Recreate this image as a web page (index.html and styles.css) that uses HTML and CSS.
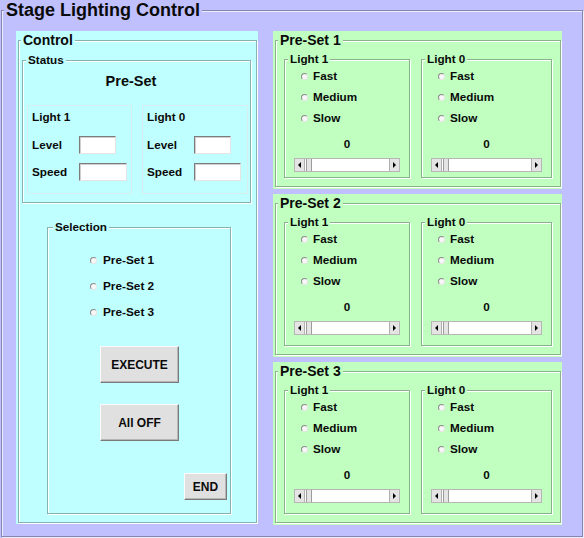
FILE: index.html
```html
<!DOCTYPE html>
<html>
<head>
<meta charset="utf-8">
<title>Stage Lighting Control</title>
<link rel="stylesheet" href="styles.css">
</head>
<body>
<fieldset class="frame">
  <legend class="frame-title">Stage Lighting Control</legend>
  <div class="frame-body">
    <div class="control-panel">
      <fieldset class="etched control-box">
        <legend class="title-lg">Control</legend>
        <div class="control-body">
          <fieldset class="etched status-box">
            <legend class="title-sm">Status</legend>
            <div class="status-heading">Pre-Set</div>
            <div class="status-lights">
              <div class="status-light l1">
                <div class="status-light-title">Light 1</div>
                <div class="field-row"><span class="field-label">Level</span><input class="text-field w-level" type="text"></div>
                <div class="field-row"><span class="field-label">Speed</span><input class="text-field w-speed" type="text"></div>
              </div>
              <div class="status-light l0">
                <div class="status-light-title">Light 0</div>
                <div class="field-row"><span class="field-label">Level</span><input class="text-field w-level" type="text"></div>
                <div class="field-row"><span class="field-label">Speed</span><input class="text-field w-speed-0" type="text"></div>
              </div>
            </div>
          </fieldset>
          <fieldset class="etched selection-box">
            <legend class="title-sm sel-legend">Selection</legend>
            <div class="selection-body">
              <div class="radio-group sel-radios">
                <label class="radio sel-radio"><input class="dot" type="radio" name="sel">Pre-Set 1</label>
                <label class="radio sel-radio"><input class="dot" type="radio" name="sel">Pre-Set 2</label>
                <label class="radio sel-radio"><input class="dot" type="radio" name="sel">Pre-Set 3</label>
              </div>
              <button class="btn btn-big btn-execute" type="button">EXECUTE</button>
              <button class="btn btn-big btn-alloff" type="button">All OFF</button>
              <button class="btn btn-end" type="button">END</button>
            </div>
          </fieldset>
        </div>
      </fieldset>
    </div>

    <div class="presets">
      <div class="preset-panel">
        <fieldset class="etched preset-box">
          <legend class="title-lg">Pre-Set 1</legend>
          <div class="preset-lights">
            <fieldset class="etched preset-light compact narrow">
              <legend class="title-sm">Light 1</legend>
              <div class="radio-group preset-radios">
                <label class="radio"><input class="dot" type="radio" name="p1l1">Fast</label>
                <label class="radio"><input class="dot" type="radio" name="p1l1">Medium</label>
                <label class="radio"><input class="dot" type="radio" name="p1l1">Slow</label>
              </div>
              <div class="level-value">0</div>
              <div class="scrollbar"><span class="sb-btn sb-left"></span><span class="sb-thumb"></span><span class="sb-track"></span><span class="sb-btn sb-right"></span></div>
            </fieldset>
            <fieldset class="etched preset-light compact wide">
              <legend class="title-sm">Light 0</legend>
              <div class="radio-group preset-radios">
                <label class="radio"><input class="dot" type="radio" name="p1l0">Fast</label>
                <label class="radio"><input class="dot" type="radio" name="p1l0">Medium</label>
                <label class="radio"><input class="dot" type="radio" name="p1l0">Slow</label>
              </div>
              <div class="level-value">0</div>
              <div class="scrollbar"><span class="sb-btn sb-left"></span><span class="sb-thumb"></span><span class="sb-track"></span><span class="sb-btn sb-right"></span></div>
            </fieldset>
          </div>
        </fieldset>
      </div>

      <div class="preset-panel">
        <fieldset class="etched preset-box">
          <legend class="title-lg">Pre-Set 2</legend>
          <div class="preset-lights">
            <fieldset class="etched preset-light narrow">
              <legend class="title-sm">Light 1</legend>
              <div class="radio-group preset-radios">
                <label class="radio"><input class="dot" type="radio" name="p2l1">Fast</label>
                <label class="radio"><input class="dot" type="radio" name="p2l1">Medium</label>
                <label class="radio"><input class="dot" type="radio" name="p2l1">Slow</label>
              </div>
              <div class="level-value">0</div>
              <div class="scrollbar"><span class="sb-btn sb-left"></span><span class="sb-thumb"></span><span class="sb-track"></span><span class="sb-btn sb-right"></span></div>
            </fieldset>
            <fieldset class="etched preset-light wide">
              <legend class="title-sm">Light 0</legend>
              <div class="radio-group preset-radios">
                <label class="radio"><input class="dot" type="radio" name="p2l0">Fast</label>
                <label class="radio"><input class="dot" type="radio" name="p2l0">Medium</label>
                <label class="radio"><input class="dot" type="radio" name="p2l0">Slow</label>
              </div>
              <div class="level-value">0</div>
              <div class="scrollbar"><span class="sb-btn sb-left"></span><span class="sb-thumb"></span><span class="sb-track"></span><span class="sb-btn sb-right"></span></div>
            </fieldset>
          </div>
        </fieldset>
      </div>

      <div class="preset-panel">
        <fieldset class="etched preset-box">
          <legend class="title-lg">Pre-Set 3</legend>
          <div class="preset-lights">
            <fieldset class="etched preset-light narrow">
              <legend class="title-sm">Light 1</legend>
              <div class="radio-group preset-radios">
                <label class="radio"><input class="dot" type="radio" name="p3l1">Fast</label>
                <label class="radio"><input class="dot" type="radio" name="p3l1">Medium</label>
                <label class="radio"><input class="dot" type="radio" name="p3l1">Slow</label>
              </div>
              <div class="level-value">0</div>
              <div class="scrollbar"><span class="sb-btn sb-left"></span><span class="sb-thumb"></span><span class="sb-track"></span><span class="sb-btn sb-right"></span></div>
            </fieldset>
            <fieldset class="etched preset-light wide">
              <legend class="title-sm">Light 0</legend>
              <div class="radio-group preset-radios">
                <label class="radio"><input class="dot" type="radio" name="p3l0">Fast</label>
                <label class="radio"><input class="dot" type="radio" name="p3l0">Medium</label>
                <label class="radio"><input class="dot" type="radio" name="p3l0">Slow</label>
              </div>
              <div class="level-value">0</div>
              <div class="scrollbar"><span class="sb-btn sb-left"></span><span class="sb-thumb"></span><span class="sb-track"></span><span class="sb-btn sb-right"></span></div>
            </fieldset>
          </div>
        </fieldset>
      </div>
    </div>
  </div>
</fieldset>
</body>
</html>
```

FILE: styles.css
```css
* { box-sizing: border-box; }

html, body { margin: 0; padding: 0; }

body {
  --panel-bg: #c0c0ff;
  --shade: #8686b2;
  width: 584px;
  height: 538px;
  overflow: hidden;
  background: #c0c0ff;
  font-family: "Liberation Sans", Arial, sans-serif;
  font-weight: bold;
  color: #0a0a0a;
}

fieldset { margin: 0; padding: 0; min-width: 0; }

legend {
  padding: 0 2px;
  background: var(--panel-bg);
}

.etched {
  border: 1px solid var(--shade);
  box-shadow: inset 1px 1px 0 #fff, 1px 1px 0 #fff;
}

/* outer frame */
.frame {
  margin-left: 1px;
  width: 582px;
  border: 1px solid var(--shade);
  box-shadow: inset 1px 1px 0 #ececff, 1px 1px 0 #ececff;
}
.frame-title {
  margin-left: 2px;
  font-size: 18px;
  line-height: 20px;
}
.frame-body {
  display: flex;
  align-items: flex-start;
  gap: 15px;
  padding: 11px 20px 11px 14px;
}

.title-lg { margin-left: 2px; font-size: 14px; line-height: 16px; }
.title-sm { margin-left: 3px; font-size: 11.7px; line-height: 14px; }

/* control column */
.control-panel {
  --panel-bg: #c0ffff;
  --shade: #86b2b2;
  width: 242px;
  height: 493px;
  padding: 1px 1px 1px 2px;
  background: #c0ffff;
  display: flex;
  flex-direction: column;
}
.control-box { flex: 1; }
.control-body { padding: 5px 0 0 3px; }

.status-box { width: 229px; }
.status-heading {
  margin-top: 5px;
  padding-right: 11px;
  font-size: 14.5px;
  line-height: 18px;
  text-align: center;
}
.status-lights {
  display: flex;
  gap: 10px;
  margin: 15px 0 8px 4px;
}
.status-light {
  border: 1px solid #d6eeee;
  padding: 4px 3px 12px 4px;
}
.status-light.l1 { width: 105px; }
.status-light.l0 { width: 106px; }
.status-light-title { font-size: 11.7px; line-height: 14px; }
.field-row {
  display: grid;
  grid-template-columns: 47px auto;
  align-items: center;
  margin-top: 12px;
}
.field-row + .field-row { margin-top: 9px; }
.field-label { font-size: 11.7px; line-height: 14px; }
.text-field {
  display: block;
  height: 18px;
  margin: 0;
  padding: 0;
  background: #fff;
  border: 1px solid;
  border-color: #7c7c7c #e4e4e4 #e4e4e4 #7c7c7c;
  box-shadow: inset 1px 1px 0 #cfcfcf;
  font: inherit;
  outline: none;
}
.w-level { width: 37px; }
.w-speed { width: 48px; }
.w-speed-0 { width: 47px; }

.selection-box { width: 184px; margin: 17px 0 0 25px; }
.sel-legend { margin-left: 5px; }
.selection-body {
  display: flex;
  flex-direction: column;
  align-items: flex-start;
  padding: 0 3px 13px 0;
}

.radio-group { display: flex; flex-direction: column; }
.sel-radios { gap: 12px; margin: 19px 0 0 42px; }
.radio {
  display: flex;
  align-items: center;
  gap: 5px;
  font-size: 11.7px;
  line-height: 14px;
}
.sel-radio { gap: 6px; font-size: 11.8px; }
.dot {
  -webkit-appearance: none;
  appearance: none;
  width: 7px;
  height: 7px;
  margin: 0;
  padding: 0;
  border-radius: 50%;
  border: 1px solid;
  border-color: #8a8a8a #e6e6e6 #e6e6e6 #8a8a8a;
  background: #f7f7f7;
  flex: none;
}

.btn {
  margin: 0;
  padding: 0;
  background: #e0e0e0;
  border: 1px solid;
  border-color: #fbfbfb #7a7a7a #7a7a7a #fbfbfb;
  box-shadow: inset -1px -1px 0 #b6b6b6;
  font: inherit;
  font-size: 12px;
  color: #0a0a0a;
}
.btn-big { width: 79px; height: 37px; margin-left: 52px; }
.btn-execute { margin-top: 27px; }
.btn-alloff { margin-top: 21px; }
.btn-end {
  width: 43px;
  height: 27px;
  margin-top: 32px;
  align-self: flex-end;
}

/* presets column */
.presets {
  width: 289px;
  display: flex;
  flex-direction: column;
  gap: 5px;
}
.preset-panel {
  --panel-bg: #c0ffc0;
  --shade: #8ab28a;
  background: #c0ffc0;
  padding: 1px 1px 2px 2px;
}
.preset-lights {
  display: flex;
  gap: 11px;
  margin: 4px 8px 8px 8px;
}
.preset-light { padding-bottom: 10px; }
.preset-light.compact { padding-bottom: 5px; }
.preset-light.narrow { width: 126px; }
.preset-light.wide { width: 131px; }
.preset-radios { gap: 7px; margin: 3px 0 0 16px; }
.level-value {
  margin-top: 12px;
  font-size: 11.7px;
  line-height: 14px;
  text-align: center;
}

.scrollbar {
  display: flex;
  height: 14px;
  margin: 7px 9px 0;
  border: 1px solid #b6b6b6;
  background: #fff;
}
.sb-btn {
  width: 10px;
  background: #e4e4e4;
  display: flex;
  align-items: center;
  justify-content: center;
}
.sb-left { border-right: 1px solid #b0b0b0; }
.sb-right { border-left: 1px solid #b0b0b0; }
.sb-left::before,
.sb-right::before {
  content: "";
  width: 0;
  height: 0;
  border-style: solid;
}
.sb-left::before {
  border-width: 3px 3px 3px 0;
  border-color: transparent #000 transparent transparent;
}
.sb-right::before {
  border-width: 3px 0 3px 3px;
  border-color: transparent transparent transparent #000;
}
.sb-thumb {
  width: 6px;
  margin-left: 1px;
  background: #e4e4e4;
  border-left: 1px solid #9c9c9c;
  border-right: 1px solid #9c9c9c;
}
.sb-track { flex: 1; }
```
